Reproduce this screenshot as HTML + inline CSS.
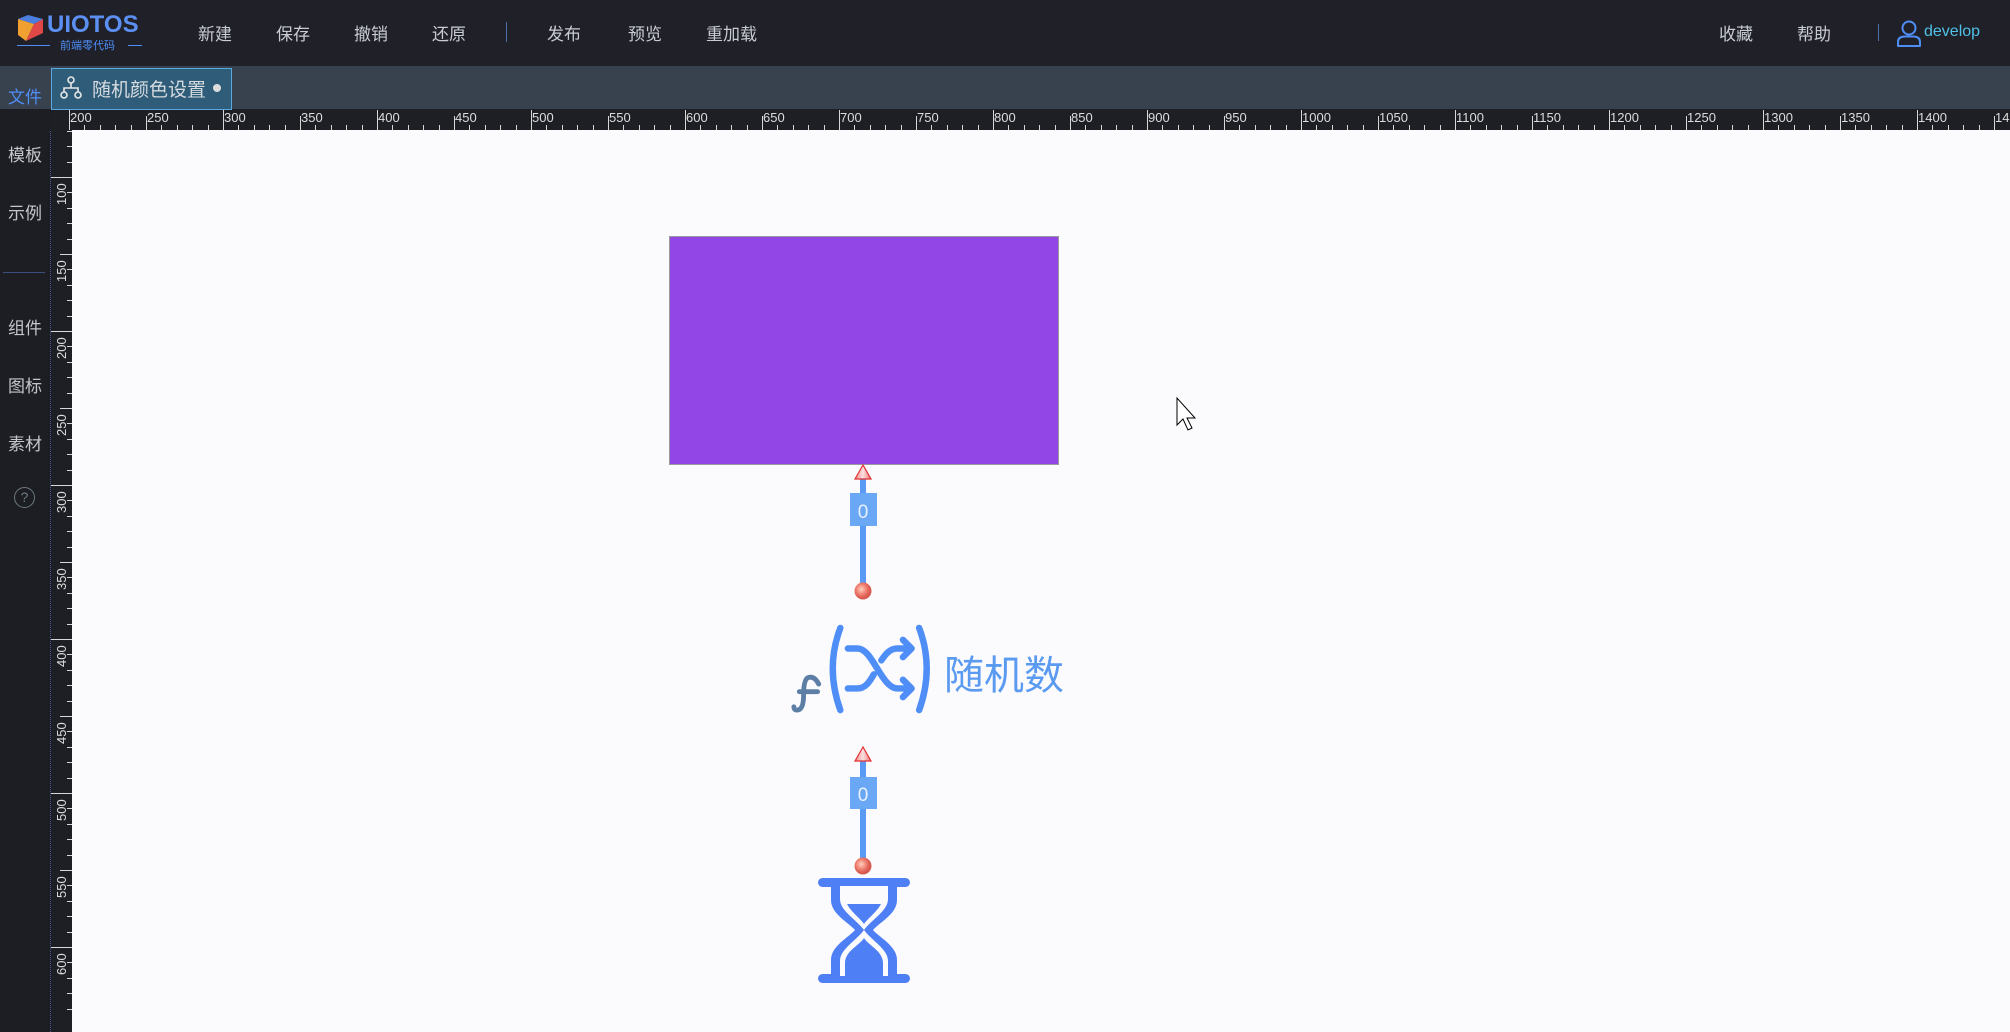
<!DOCTYPE html>
<html style="overflow:hidden;width:2010px;height:1032px"><head><meta charset="utf-8">
<style>
*{margin:0;padding:0;box-sizing:border-box}
body{width:2010px;height:1032px;overflow:hidden;background:#fbfbfe;font-family:"Liberation Sans","Noto Sans CJK SC",sans-serif;position:relative}
#wrap{position:absolute;left:0;top:0;width:2010px;height:1032px;overflow:hidden}
.abs{position:absolute}
#top{left:0;top:0;width:2010px;height:66px;background:#1f2028}
#strip{left:0;top:66px;width:2010px;height:43px;background:#38424f}
#side{left:0;top:109px;width:50px;height:923px;background:#1d1e24}
#vr{left:50px;top:109px;width:22px;height:923px;background:#1e1f25;border-left:1px dotted #4a5a8a}
#hr{left:50px;top:109px;width:1960px;height:21px;background:#1e1f25}
.m{color:#c9ccd3;font-size:17px;top:20px}
.s{color:#c3c6cc;font-size:17px;left:8px}
.t{background:#d8d8d8}
.hl{color:#dcdcdc;font-size:13px;top:110px}
.vl{color:#dcdcdc;font-size:13px;transform-origin:0 0;transform:rotate(-90deg)}
</style></head><body><div id="wrap">
<div id="top" class="abs"></div>
<div id="strip" class="abs"></div>
<div id="side" class="abs"></div>
<div id="vr" class="abs"></div>
<div id="hr" class="abs"></div>

<svg class="abs" style="left:16px;top:13px" width="30" height="30" viewBox="0 0 30 30">
<polygon points="2,6 12,2 27,6 18,11" fill="#4a7fe0"/>
<polygon points="2,6 18,11 10,28 2,22" fill="#f0a030"/>
<polygon points="18,11 27,6 27,20 10,28" fill="#e04848"/>
</svg>
<div class="abs" style="left:47px;top:11px;color:#5b8ff2;font-size:24px;font-weight:bold">UIOTOS</div>
<div class="abs" style="left:17px;top:45px;width:33px;height:1px;background:#4f8ef7"></div>
<div class="abs" style="left:128px;top:45px;width:14px;height:1px;background:#4f8ef7"></div>
<div class="abs" style="left:60px;top:37px;color:#4f8ef7;font-size:11px">前端零代码</div>

<div class="abs m" style="left:198px">新建</div>
<div class="abs m" style="left:276px">保存</div>
<div class="abs m" style="left:354px">撤销</div>
<div class="abs m" style="left:432px">还原</div>
<div class="abs" style="left:506px;top:22px;width:1px;height:20px;background:#4f6fa8"></div>
<div class="abs m" style="left:547px">发布</div>
<div class="abs m" style="left:628px">预览</div>
<div class="abs m" style="left:706px">重加载</div>
<div class="abs m" style="left:1719px">收藏</div>
<div class="abs m" style="left:1797px">帮助</div>
<div class="abs" style="left:1878px;top:24px;width:1px;height:17px;background:#4f6fa8"></div>
<svg class="abs" style="left:1896px;top:20px" width="26" height="28" viewBox="0 0 26 28">
<circle cx="13" cy="8" r="6.5" fill="none" stroke="#4f8ef7" stroke-width="2"/>
<path d="M2,26 L2,22 Q2,17 8,16.5 L18,16.5 Q24,17 24,22 L24,26 Z" fill="none" stroke="#4f8ef7" stroke-width="2" stroke-linejoin="round"/>
</svg>
<div class="abs" style="left:1924px;top:23px;color:#4fc0e6;font-size:16px">develop</div>

<div class="abs" style="left:51px;top:68px;width:181px;height:42px;background:#2e5c79;border:1px solid #5aa9e0"></div>
<svg class="abs" style="left:60px;top:76px" width="22" height="24" viewBox="0 0 22 24">
<g fill="none" stroke="#e6e6e6" stroke-width="1.6"><circle cx="11" cy="4" r="3"/><circle cx="4" cy="19" r="3"/><circle cx="18" cy="19" r="3"/><path d="M11,7 V12 M4,16 V12 H18 V16"/></g>
</svg>
<div class="abs" style="left:92px;top:75px;color:#d6dbe0;font-size:19px">随机颜色设置</div>
<div class="abs" style="left:213px;top:84px;width:8px;height:8px;border-radius:50%;background:#ddd"></div>

<div class="abs s" style="top:83px;color:#4f8ef7">文件</div>
<div class="abs s" style="top:141px">模板</div>
<div class="abs s" style="top:199px">示例</div>
<div class="abs" style="left:3px;top:272px;width:42px;height:1px;background:#3e4d80"></div>
<div class="abs s" style="top:314px">组件</div>
<div class="abs s" style="top:372px">图标</div>
<div class="abs s" style="top:430px">素材</div>
<div class="abs" style="left:14px;top:487px;width:21px;height:21px;border:1.5px solid #6b7a80;border-radius:50%;color:#6b7a80;font-size:14px;text-align:center;line-height:18px">?</div>

<div id="rulers"></div>

<div class="abs" style="left:669px;top:236px;width:390px;height:229px;background:#9346e6;border:1px solid #9a9a9a"></div>

<svg class="abs" style="left:0;top:0" width="2010" height="1032">
<defs><radialGradient id="b" cx="0.4" cy="0.4"><stop offset="0" stop-color="#ffd0c0"/><stop offset="0.6" stop-color="#f08070"/><stop offset="1" stop-color="#d85a50"/></radialGradient>
<linearGradient id="tr" x1="0" x2="1"><stop offset="0" stop-color="#f48a8a"/><stop offset="0.5" stop-color="#fbe0e0"/><stop offset="1" stop-color="#ee7070"/></linearGradient></defs>
<g>
<line x1="863" y1="476" x2="863" y2="585" stroke="#5a9af5" stroke-width="6"/>
<polygon points="863,465 855,479 871,479" fill="url(#tr)" stroke="#e03030" stroke-width="1.2"/>
<rect x="850" y="493" width="27" height="33" fill="#6aa8f5"/>
<text x="863" y="518" fill="#e8f0ff" font-size="19" text-anchor="middle" font-family="Liberation Sans">0</text>
<circle cx="863" cy="591" r="8.5" fill="url(#b)"/>
</g>
<g transform="translate(0,10)">
<line x1="863" y1="750" x2="863" y2="852" stroke="#5a9af5" stroke-width="6"/>
<polygon points="863,737 855,751 871,751" fill="url(#tr)" stroke="#e03030" stroke-width="1.2"/>
<rect x="850" y="767" width="27" height="32" fill="#6aa8f5"/>
<text x="863" y="791" fill="#e8f0ff" font-size="19" text-anchor="middle" font-family="Liberation Sans">0</text>
<circle cx="863" cy="856" r="8.5" fill="url(#b)"/>
</g>
<g transform="translate(863,669) scale(1.08) translate(-863,-662)">
<path d="M822,676 Q818,668 812,670 Q808,672 808,686 Q808,700 802,700 Q799,700 799,697 M804,683 H821" fill="none" stroke="#5d7fa6" stroke-width="4.5" stroke-linecap="round"/>
<path d="M842,624 Q828,661 842,700" fill="none" stroke="#4f8ef7" stroke-width="6" stroke-linecap="round"/>
<path d="M915,624 Q929,661 915,700" fill="none" stroke="#4f8ef7" stroke-width="6" stroke-linecap="round"/>
<g fill="none" stroke="#4f8ef7" stroke-width="6" stroke-linecap="round" stroke-linejoin="round">
<path d="M849,643 H858 C872,643 880,680 895,680 H906"/>
<path d="M849,680 H858 C866,680 870,672 873,667 M880,654 C884,648 888,643 895,643 H906"/>
<path d="M900,635 L908,643 L900,651"/>
<path d="M900,672 L908,680 L900,688"/>
</g>
</g>
<text x="944" y="689" fill="#5a9af0" font-size="40" font-family="Noto Sans CJK SC">随机数</text>
<g transform="translate(0,16)">
<g fill="#4e7ff5">
<rect x="818" y="862" width="92" height="9" rx="4.5"/>
<rect x="818" y="958" width="92" height="9" rx="4.5"/>
<path d="M831,870 H897 V884 C897,898 880,906 873,914 C880,922 897,930 897,944 V960 H831 V944 C831,930 848,922 855,914 C848,906 831,898 831,884 Z"/>
</g>
<path d="M840,870 H888 V883 C888,895 872,903 864,914 C872,925 888,933 888,945 V960 H883 V947 C883,935 868,929 864,922 C860,929 845,935 845,947 V960 H840 V945 C840,933 856,925 864,914 C856,903 840,895 840,883 Z" fill="#fbfbfe"/>
<path d="M845,870 H883 V884 C883,893 870,900 864,908 C858,900 845,893 845,884 Z" fill="#fbfbfe"/>
<path d="M847,888 H881 C877,896 868,902 864,908 C860,902 851,896 847,888 Z" fill="#4e7ff5"/>
</g>
<path d="M1177,398 L1177,425 L1183,419 L1188,430 L1192,428 L1187,418 L1195,418 Z" fill="#fff" stroke="#000" stroke-width="1"/>
</svg>
</div>
<script>
var r=document.getElementById('rulers'),h='';
for(var u=200;u<=1460;u+=10){var x=Math.round(223+(u-300)*1.54);if(x<52||x>2005)continue;
 if(u%50==0){var tp=(u%100==0)?110:116;h+='<div class="abs t" style="left:'+x+'px;top:'+tp+'px;width:1px;height:'+(130-tp)+'px"></div><div class="abs hl" style="left:'+(x+1)+'px">'+u+'</div>';}
 else h+='<div class="abs t" style="left:'+x+'px;top:125px;width:1px;height:5px"></div>';}
for(var u=70;u<=640;u+=10){var y=Math.round(177+(u-100)*1.54);if(y<131||y>1030)continue;
 if(u%50==0){var lp=(u%100==0)?51:60;h+='<div class="abs t" style="left:'+lp+'px;top:'+y+'px;width:'+(72-lp)+'px;height:1px"></div>';if(y+28<1032)h+='<div class="abs vl" style="left:54px;top:'+(y+28)+'px">'+u+'</div>';}
 else h+='<div class="abs t" style="left:67px;top:'+y+'px;width:5px;height:1px"></div>';}
r.innerHTML=h;
</script>
</body></html>
